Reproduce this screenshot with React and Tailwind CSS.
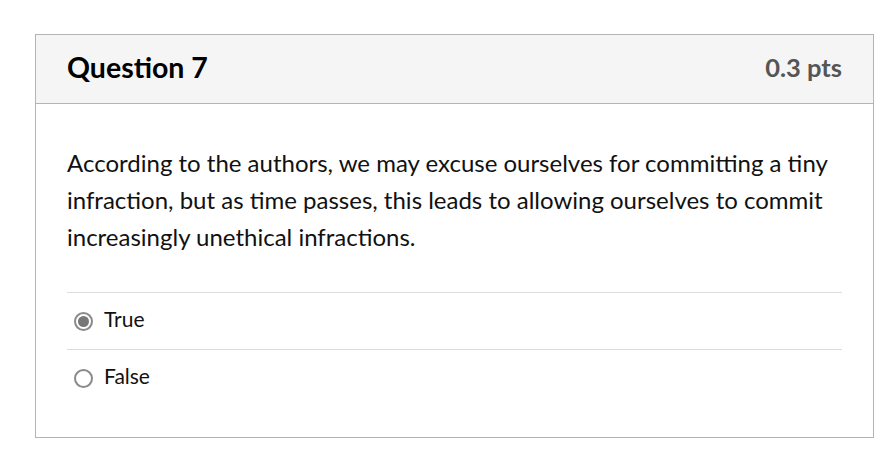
const Radio = ({ checked }) => (
  <span className="flex h-[19px] w-[19px] items-center justify-center rounded-full border-2 border-[#8a8a8a] bg-white">
    {checked && <span className="h-[11px] w-[11px] rounded-full bg-[#777]" />}
  </span>
);

const App = () => {
  const answers = [
    { label: 'True', checked: true },
    { label: 'False', checked: false },
  ];

  return (
    <div className="h-[454px] w-[889px] bg-white pl-[35px] pt-[34px] font-['Lato',sans-serif] text-[#111]">
      <div className="w-[839px] border border-[#b4b4b4]">
        {/* Header */}
        <div className="flex h-[69px] items-center justify-between border-b border-[#b4b4b4] bg-[#f5f5f5] px-[31px] pb-[3px]">
          <h2 className="text-[28.5px] font-bold text-black">Question 7</h2>
          <span className="text-[25.5px] font-bold text-[#555]">0.3 pts</span>
        </div>

        {/* Body */}
        <div className="px-[31px] pb-[31px] pt-[40px]">
          <p className="text-[24px] leading-[37px] text-[#111]">
            According to the authors, we may excuse ourselves for committing a tiny infraction, but as time passes, this leads to allowing ourselves to commit increasingly unethical infractions.
          </p>
          <div className="mt-[37px]">
            {answers.map((a) => (
              <div key={a.label} className="flex h-[57px] items-center gap-[11px] border-t border-[#ddd] pl-[7px]">
                <Radio checked={a.checked} />
                <span className="-mt-[4px] text-[21px] text-[#111]">{a.label}</span>
              </div>
            ))}
          </div>
        </div>
      </div>
    </div>
  );
};

export default App;
